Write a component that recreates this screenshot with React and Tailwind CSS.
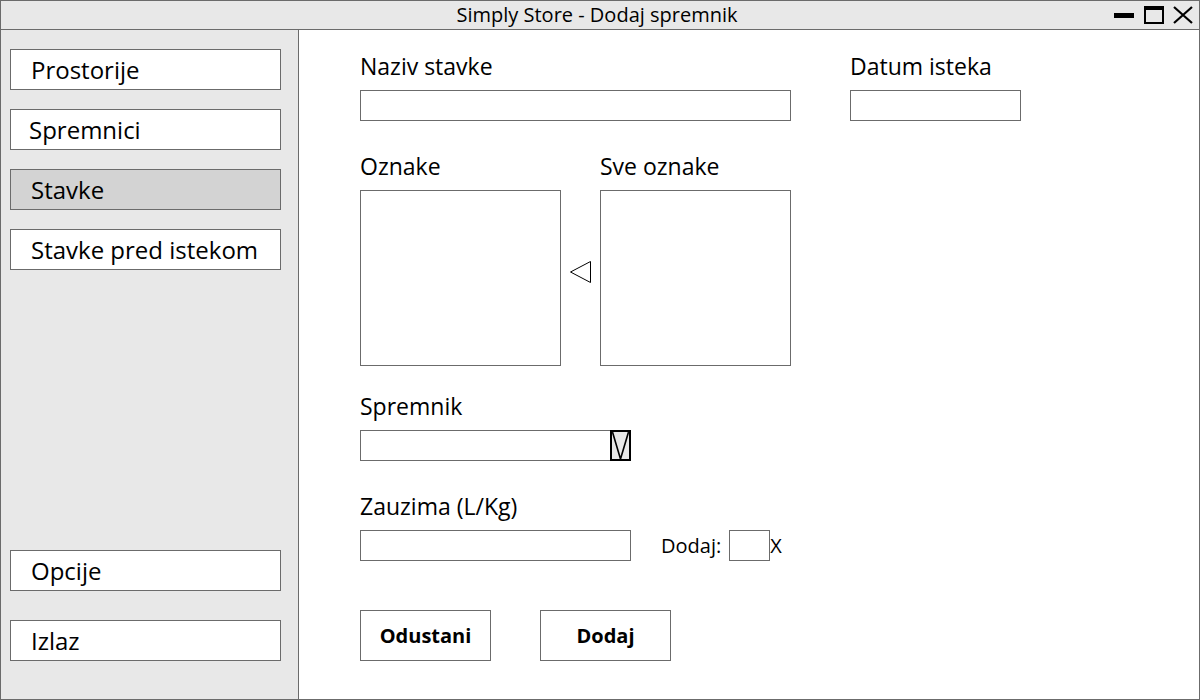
import React from "react";

function NavBtn({ label, active, pl = "pl-[20px]" }) {
  return (
    <div
      className={`w-[271px] h-[41px] border border-[#6b6b6b] flex items-center ${pl} text-[24px] leading-none ${
        active ? "bg-[#d3d3d3]" : "bg-white"
      }`}
    >
      {label}
    </div>
  );
}

function Label({ children, className = "" }) {
  return (
    <div className={`h-[27px] leading-[27px] text-[23px] mb-[10px] whitespace-nowrap ${className}`}>
      {children}
    </div>
  );
}

export default function App() {
  return (
    <div
      className="w-[1200px] h-[700px] border border-[#6b6b6b] flex flex-col text-black bg-white overflow-hidden"
      style={{ fontFamily: '"Open Sans", "Noto Sans", sans-serif' }}
    >
      {/* Title bar */}
      <div className="h-[29px] shrink-0 bg-[#e8e8e8] border-b border-[#6b6b6b] relative flex items-center justify-center">
        <span className="text-[20px] leading-none -mt-[1px] -ml-[6px]">Simply Store - Dodaj spremnik</span>
        <div className="absolute right-[5px] top-0 h-[28px] flex items-center">
          <div className="w-[20px] h-[5px] bg-black mr-[10px]" />
          <div className="w-[20px] h-[18px] border-2 border-t-[4px] border-black mr-[8px]" />
          <svg width="22" height="18" viewBox="0 0 22 18">
            <path d="M2 1 L20 17 M20 1 L2 17" stroke="black" strokeWidth="2.2" />
          </svg>
        </div>
      </div>

      <div className="flex flex-1 min-h-0">
        {/* Sidebar */}
        <div className="w-[298px] shrink-0 bg-[#e8e8e8] border-r border-[#6b6b6b] flex flex-col pl-[9px] pt-[19px]">
          <div className="flex flex-col gap-[19px]">
            <NavBtn label="Prostorije" />
            <NavBtn label="Spremnici" pl="pl-[18px]" />
            <NavBtn label="Stavke" active />
            <NavBtn label="Stavke pred istekom" />
          </div>
          <div className="mt-auto mb-[38px] flex flex-col gap-[29px]">
            <NavBtn label="Opcije" />
            <NavBtn label="Izlaz" />
          </div>
        </div>

        {/* Main */}
        <div className="flex-1 pl-[61px] pt-[23px] flex flex-col">
          {/* Row 1 */}
          <div className="flex gap-[59px]">
            <div>
              <Label>Naziv stavke</Label>
              <div className="w-[431px] h-[31px] border border-[#6b6b6b]" />
            </div>
            <div>
              <Label>Datum isteka</Label>
              <div className="w-[171px] h-[31px] border border-[#6b6b6b]" />
            </div>
          </div>

          {/* Row 2 */}
          <div className="flex mt-[32px]">
            <div>
              <Label>Oznake</Label>
              <div className="w-[201px] h-[176px] border border-[#6b6b6b]" />
            </div>
            <div className="w-[39px] flex flex-col items-center pt-[107px]">
              <svg width="24" height="24" viewBox="0 0 24 24">
                <path d="M21.5 1.5 L21.5 22.5 L1.5 12 Z" fill="none" stroke="black" strokeWidth="1" />
              </svg>
            </div>
            <div>
              <Label>Sve oznake</Label>
              <div className="w-[191px] h-[176px] border border-[#6b6b6b]" />
            </div>
          </div>

          {/* Row 3 */}
          <div className="mt-[27px]">
            <Label>Spremnik</Label>
            <div className="w-[271px] h-[31px] border border-[#6b6b6b] flex justify-end">
              <div className="w-[21px] h-[31px] -mt-[1px] -mr-[1px] border-2 border-black bg-[#e8e8e8] flex">
                <svg width="17" height="27" viewBox="0 0 17 27">
                  <path d="M0.5 0 L8.5 27 L16.5 0" fill="none" stroke="black" strokeWidth="1.6" />
                </svg>
              </div>
            </div>
          </div>

          {/* Row 4 */}
          <div className="mt-[32px]">
            <Label>Zauzima (L/Kg)</Label>
            <div className="flex items-center">
              <div className="w-[271px] h-[31px] border border-[#6b6b6b]" />
              <span className="ml-[30px] text-[20px] leading-none">Dodaj:</span>
              <div className="ml-[8px] w-[41px] h-[31px] border border-[#6b6b6b]" />
              <span className="text-[20px] leading-none">X</span>
            </div>
          </div>

          {/* Row 5 */}
          <div className="mt-[49px] flex gap-[49px]">
            <div className="w-[131px] h-[51px] border border-[#6b6b6b] flex items-center justify-center text-[20px] font-bold">
              Odustani
            </div>
            <div className="w-[131px] h-[51px] border border-[#6b6b6b] flex items-center justify-center text-[20px] font-bold">
              Dodaj
            </div>
          </div>
        </div>
      </div>
    </div>
  );
}
